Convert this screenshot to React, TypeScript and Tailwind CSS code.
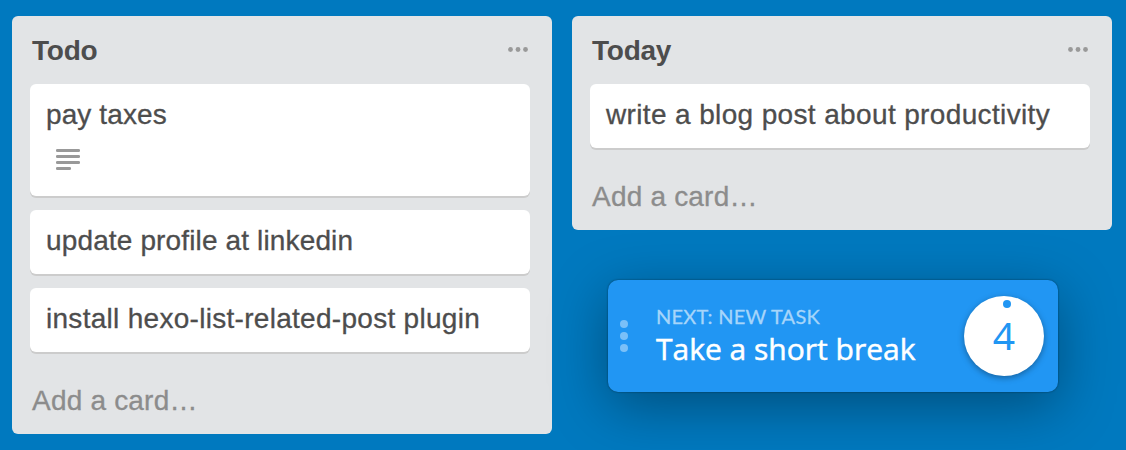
import React from "react";

function Dots() {
  return (
    <svg width="20" height="6" viewBox="0 0 20 6" fill="#999999" aria-hidden="true">
      <circle cx="2.5" cy="2.5" r="2.4" />
      <circle cx="10" cy="2.5" r="2.4" />
      <circle cx="17.5" cy="2.5" r="2.4" />
    </svg>
  );
}

function Card({ text, tracking, notes }: { text: string; tracking: string; notes?: boolean }) {
  return (
    <div className={`${notes ? "h-28" : "h-16"} shrink-0 rounded-[6px] bg-white px-4 pt-[11px] text-[28px] leading-[40px] text-[#4d4d4d] shadow-[0_2px_0_#cccccc]`}>
      <div className={`whitespace-nowrap [-webkit-text-stroke:0.3px_#4d4d4d] ${tracking}`}>{text}</div>
      {notes && (
        <svg className="mt-[14px] ml-[10px]" width="24" height="21" fill="#999999" aria-hidden="true">
          <rect width="24" height="3" rx="1.3" />
          <rect y="6" width="24" height="3" rx="1.3" />
          <rect y="12" width="24" height="3" rx="1.3" />
          <rect y="18" width="15" height="3" rx="1.3" />
        </svg>
      )}
    </div>
  );
}

function List({ title, children }: { title: string; children: React.ReactNode }) {
  return (
    <section className="w-[540px] rounded-[6px] bg-[#e2e4e6] pr-[22px] pb-[13px] pl-[18px]">
      <header className="flex h-[68px] items-center justify-between pr-[2px] pl-[2px]">
        <h2 className="pt-[2px] text-[28px] leading-[40px] font-bold tracking-[-0.25px] text-[#4d4d4d]">{title}</h2>
        <Dots />
      </header>
      <div className="flex flex-col gap-[14px]">{children}</div>
      <div className="pt-[29px] pl-[2px] text-[28px] leading-[40px] tracking-[0.2px] text-[#8c8c8c] [-webkit-text-stroke:0.3px_#8c8c8c]">Add a card…</div>
    </section>
  );
}

export default function App() {
  return (
    <main className="flex h-[450px] w-[1126px] items-start gap-5 overflow-hidden bg-[#0079bf] pt-4 pl-3 font-['Liberation_Sans',sans-serif]">
      <List title="Todo">
        <Card text="pay taxes" tracking="tracking-[0.1px]" notes />
        <Card text="update profile at linkedin" tracking="tracking-[0.14px]" />
        <Card text="install hexo-list-related-post plugin" tracking="tracking-[0.29px]" />
      </List>
      <div>
        <List title="Today">
          <Card text="write a blog post about productivity" tracking="tracking-[0.36px]" />
        </List>
        <aside className="mt-[50px] ml-9 flex h-28 w-[450px] items-center rounded-[10px] bg-[#2196f3] pr-[14px] pl-3 font-['Open_Sans',sans-serif] shadow-[0_0_2px_rgba(0,0,0,0.5),0_14px_56px_rgba(0,0,0,0.35)]">
          <svg width="8" height="32" fill="#7ac0f8" aria-hidden="true">
            <circle cx="4" cy="4" r="4" />
            <circle cx="4" cy="16" r="4" />
            <circle cx="4" cy="28" r="4" />
          </svg>
          <div className="ml-7 flex-1 whitespace-nowrap">
            <div className="pb-[2px] font-['Lato',sans-serif] text-[20px] leading-[24px] tracking-[0.25px] text-[#a6d5fa] [-webkit-text-stroke:0.3px_#a6d5fa]">NEXT: NEW TASK</div>
            <div className="text-[30px] leading-[38px] text-white [-webkit-text-stroke:0.5px_white]">Take a short break</div>
          </div>
          <div className="relative flex size-20 items-center justify-center rounded-full bg-white text-[#2196f3] shadow-[0_2px_6px_rgba(0,0,0,0.35)]">
            <span className="pb-1 font-['Noto_Sans',sans-serif] text-[39px] leading-none">4</span>
            <span className="absolute top-1 left-[39px] size-2 rounded-full bg-[#2196f3]" />
          </div>
        </aside>
      </div>
    </main>
  );
}
